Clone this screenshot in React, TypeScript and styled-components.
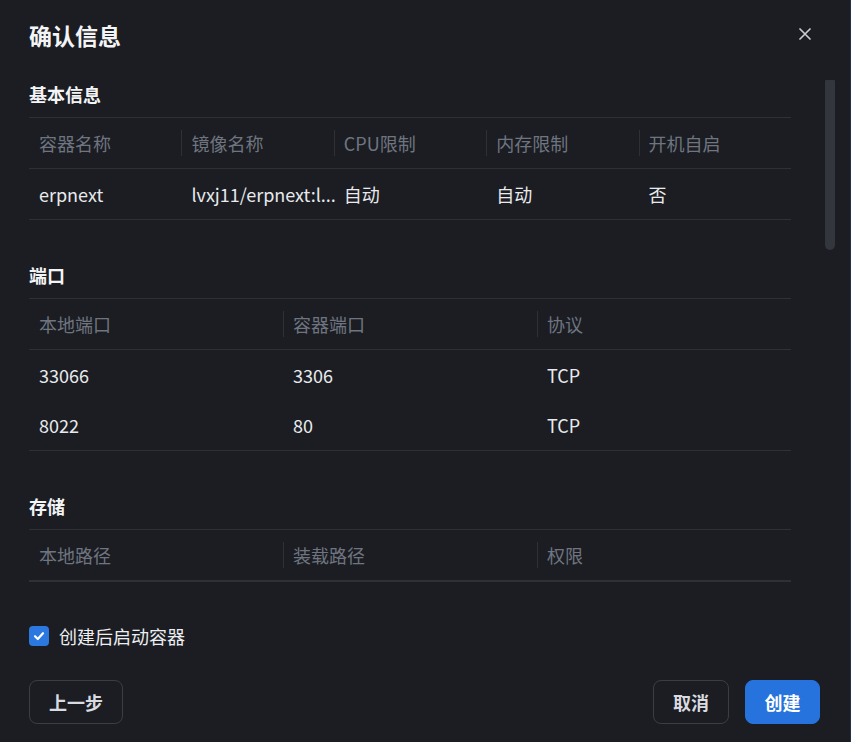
import React from "react";
import styled, { createGlobalStyle } from "styled-components";

const Global = createGlobalStyle`
  html, body { margin: 0; padding: 0; background: #1b1d22; }
  body { font-family: "Noto Sans CJK SC", "Noto Sans", sans-serif; }
  * { box-sizing: border-box; }
`;

const Dialog = styled.div`
  position: relative;
  width: 851px;
  height: 742px;
  background: #1b1d22;
  border-right: 1px solid #283044;
  display: flex;
  flex-direction: column;
  color: #e6e8eb;
  overflow: hidden;
`;

const Header = styled.div`
  display: flex;
  align-items: center;
  justify-content: space-between;
  padding: 20px 35px 0 29px;
  height: 50px;
`;

const Title = styled.h1`
  margin: 0;
  font-size: 23px;
  line-height: 30px;
  font-weight: 700;
  color: #f3f4f6;
`;

const CloseButton = styled.button`
  width: 20px;
  height: 20px;
  padding: 0;
  margin-top: -2px;
  border: none;
  background: transparent;
  display: flex;
  align-items: center;
  justify-content: center;
  color: #c9cbd1;
  cursor: pointer;
`;

const Body = styled.div`
  padding: 33px 59px 0 29px;
  display: flex;
  flex-direction: column;
  gap: 44px;
`;

const Section = styled.section`
  display: flex;
  flex-direction: column;
  gap: 12px;
`;

const SectionTitle = styled.h2`
  margin: 0;
  font-size: 18px;
  line-height: 22px;
  font-weight: 700;
  color: #f3f4f6;
`;

const Table = styled.div`
  border-top: 1px solid #2d3036;
  border-bottom: 1px solid #2d3036;
`;

const Row = styled.div<{ $cols: number; $head?: boolean }>`
  display: grid;
  grid-template-columns: repeat(${(p) => p.$cols}, 1fr);
  height: ${(p) => (p.$head ? 51 : 50)}px;
  border-bottom: ${(p) => (p.$head ? "1px solid #2d3036" : "none")};
`;

const Cell = styled.div<{ $head?: boolean }>`
  position: relative;
  display: flex;
  align-items: center;
  padding: 0 10px;
  min-width: 0;
  font-size: 18px;
  line-height: 24px;
  white-space: nowrap;
  color: ${(p) => (p.$head ? "#6f7580" : "#e8eaed")};

  & + &::before {
    content: "";
    display: ${(p) => (p.$head ? "block" : "none")};
    position: absolute;
    left: 0;
    top: 12px;
    bottom: 12px;
    width: 1px;
    background: #2d3036;
  }
`;

const CheckRow = styled.label`
  display: flex;
  align-items: center;
  gap: 10px;
  height: 22px;
  margin-top: -1px;
  font-size: 18px;
  color: #eceef1;
`;

const CheckBox = styled.span`
  width: 20px;
  height: 20px;
  border-radius: 4px;
  background: #2b78e0;
  display: flex;
  align-items: center;
  justify-content: center;
`;

const Footer = styled.div`
  margin-top: auto;
  display: flex;
  align-items: center;
  justify-content: space-between;
  padding: 0 30px 18px 29px;
`;

const Actions = styled.div`
  display: flex;
  gap: 16px;
`;

const Button = styled.button<{ $primary?: boolean }>`
  height: 44px;
  padding: 0 ${(p) => (p.$primary ? "18.5px" : "19px")};
  border-radius: 8px;
  border: 1px solid ${(p) => (p.$primary ? "#2673dd" : "#3a3d44")};
  background: ${(p) => (p.$primary ? "#2673dd" : "transparent")};
  color: ${(p) => (p.$primary ? "#ffffff" : "#d9dbe0")};
  font-family: inherit;
  font-size: 18px;
  font-weight: 700;
  line-height: 24px;
  cursor: pointer;
`;

const ScrollThumb = styled.div`
  position: absolute;
  left: 825px;
  top: 80px;
  width: 10px;
  height: 170px;
  border-radius: 1px 1px 5px 5px;
  background: #33363c;
`;

type TableData = { head: string[]; rows: string[][] };

const basic: TableData = {
  head: ["容器名称", "镜像名称", "CPU限制", "内存限制", "开机自启"],
  rows: [["erpnext", "lvxj11/erpnext:l...", "自动", "自动", "否"]],
};

const ports: TableData = {
  head: ["本地端口", "容器端口", "协议"],
  rows: [
    ["33066", "3306", "TCP"],
    ["8022", "80", "TCP"],
  ],
};

const storage: TableData = {
  head: ["本地路径", "装载路径", "权限"],
  rows: [],
};

function InfoTable({ data }: { data: TableData }) {
  const cols = data.head.length;
  return (
    <Table>
      <Row $cols={cols} $head>
        {data.head.map((h) => (
          <Cell $head key={h}>
            {h}
          </Cell>
        ))}
      </Row>
      {data.rows.map((r, i) => (
        <Row $cols={cols} key={i}>
          {r.map((c, j) => (
            <Cell key={j}>{c}</Cell>
          ))}
        </Row>
      ))}
    </Table>
  );
}

export default function App() {
  return (
    <>
      <Global />
      <Dialog>
        <Header>
          <Title>确认信息</Title>
          <CloseButton aria-label="close">
            <svg width="12" height="12" viewBox="0 0 12 12">
              <path d="M1 1 L11 11 M11 1 L1 11" stroke="currentColor" strokeWidth="1.7" strokeLinecap="round" />
            </svg>
          </CloseButton>
        </Header>
        <Body>
          <Section>
            <SectionTitle>基本信息</SectionTitle>
            <InfoTable data={basic} />
          </Section>
          <Section>
            <SectionTitle>端口</SectionTitle>
            <InfoTable data={ports} />
          </Section>
          <Section>
            <SectionTitle>存储</SectionTitle>
            <InfoTable data={storage} />
          </Section>
          <CheckRow>
            <CheckBox>
              <svg width="14" height="14" viewBox="0 0 14 14">
                <path d="M3 7.2 L5.8 10 L11 4.2" fill="none" stroke="#fff" strokeWidth="2.2" strokeLinecap="round" strokeLinejoin="round" />
              </svg>
            </CheckBox>
            创建后启动容器
          </CheckRow>
        </Body>
        <Footer>
          <Button>上一步</Button>
          <Actions>
            <Button>取消</Button>
            <Button $primary>创建</Button>
          </Actions>
        </Footer>
        <ScrollThumb />
      </Dialog>
    </>
  );
}
